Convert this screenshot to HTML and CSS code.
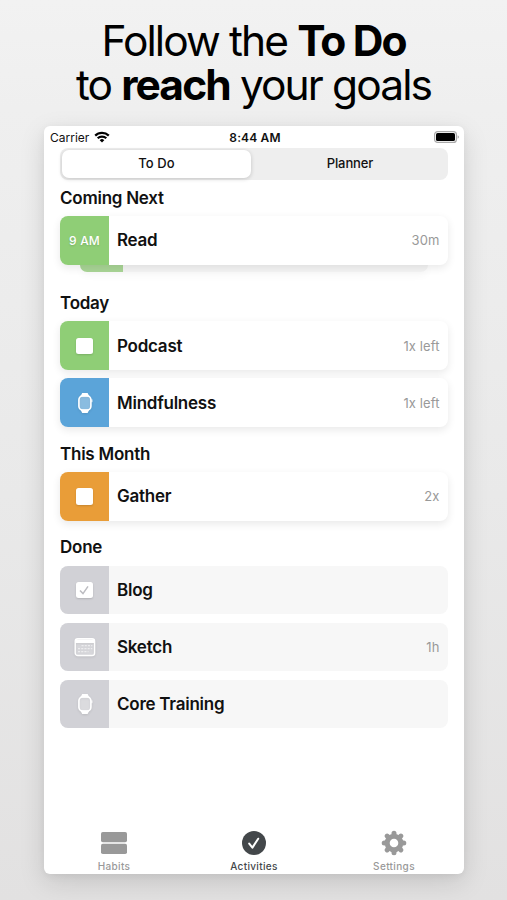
FILE: index.html
```html
<!DOCTYPE html>
<html lang="en">
<head>
<meta charset="utf-8">
<title>To Do</title>
<link rel="stylesheet" href="styles.css">
</head>
<body>
<svg class="defs" width="0" height="0" aria-hidden="true">
  <symbol id="watch" viewBox="0 0 16 22">
    <path d="M3.4 4.6 5.2 1h5.4l1.8 3.6ZM3.4 17.4 5.2 21h5.4l1.8-3.6Z" fill="#fff"/>
    <rect x="1.9" y="3.9" width="12" height="14.2" rx="3.8" fill="#fff" fill-opacity=".3" stroke="#fff" stroke-width="1.6"/>
    <path d="M14.9 7.4v2.8" stroke="#fff" stroke-width="1"/>
  </symbol>
</svg>
<h1 class="title"><span class="line line-one">Follow the <b>To Do</b></span><span class="line line-two">to <b>reach</b> your goals</span></h1>
<main class="phone">
  <header class="status">
    <div class="carrier"><span>Carrier</span>
      <svg width="16" height="12" viewBox="0 0 16 12" fill="none" stroke="#000" stroke-width="2.2"><path d="M1.2 4.6a9.7 9.7 0 0 1 13.6 0M3.7 7.3a6.1 6.1 0 0 1 8.6 0"/><path d="m8 11.6-2.3-2.4a3.3 3.3 0 0 1 4.6 0Z" fill="#000" stroke="none"/></svg>
    </div>
    <time class="clock">8:44 AM</time>
    <svg class="battery" width="26" height="12" viewBox="0 0 26 12"><rect x=".6" y=".6" width="21.8" height="10.8" rx="3" fill="#fff" stroke="#aaa" stroke-width="1.2"/><rect x="2" y="2" width="19" height="8" rx="1.6"/><path d="M23.6 4.2c1.8.7 1.8 2.9 0 3.6Z" fill="#aaa"/></svg>
  </header>
  <nav class="segments"><span class="segment selected">To Do</span><span class="segment planner">Planner</span></nav>

  <section class="group next">
    <h2>Coming Next</h2>
    <div class="stack">
      <div class="card"><div class="tile green"><span class="hour">9 AM</span></div><span class="name">Read</span><span class="amount">30m</span></div>
      <div class="peek"></div>
    </div>
  </section>

  <section class="group">
    <h2>Today</h2>
    <div class="card"><div class="tile green"><i class="box"></i></div><span class="name">Podcast</span><span class="amount">1x left</span></div>
    <div class="card"><div class="tile blue"><svg class="icon" width="16" height="22"><use href="#watch"/></svg></div><span class="name">Mindfulness</span><span class="amount">1x left</span></div>
  </section>

  <section class="group">
    <h2>This Month</h2>
    <div class="card"><div class="tile orange"><i class="box"></i></div><span class="name">Gather</span><span class="amount">2x</span></div>
  </section>

  <section class="group done">
    <h2>Done</h2>
    <div class="card"><div class="tile gray"><i class="box"><svg width="16" height="16" viewBox="0 0 16 16" fill="none" stroke="#bcbcc1" stroke-width="1.5"><path d="m4 8.4 3 3.2L12 4.4"/></svg></i></div><span class="name">Blog</span></div>
    <div class="card"><div class="tile gray"><svg class="icon" width="22" height="20" viewBox="0 0 22 20" fill="none" stroke="#fff"><rect x="1.2" y="1.7" width="19.4" height="16.8" rx="2.6" fill="#fff" fill-opacity=".2" stroke-width="1.4"/><path d="M1.5 4.2h18.8" stroke-width="3.6"/><path d="M7.5 8.7h10.8M4 11.7h14.3M4 14.7h10.5" stroke-width="1.3" stroke-dasharray="2.1 1.1" stroke-opacity=".55"/></svg></div><span class="name">Sketch</span><span class="amount">1h</span></div>
    <div class="card"><div class="tile gray"><svg class="icon" width="16" height="22"><use href="#watch"/></svg></div><span class="name">Core Training</span></div>
  </section>

  <footer class="tabs">
    <div class="tab"><svg width="26" height="26" viewBox="0 0 26 26" fill="#999"><rect y="2" width="26" height="10.3" rx="1.8"/><rect y="13.8" width="26" height="10.3" rx="1.8"/></svg><span>Habits</span></div>
    <div class="tab active"><svg width="26" height="26" viewBox="0 0 26 26"><circle cx="13" cy="13" r="12" fill="#43474a"/><path d="m8.2 13.6 3.2 4L17.2 8.7" fill="none" stroke="#fff" stroke-width="2" stroke-linecap="round" stroke-linejoin="round"/></svg><span>Activities</span></div>
    <div class="tab"><svg width="26" height="26" viewBox="0 0 26 26" stroke="#999"><circle cx="13" cy="13" r="6.8" fill="none" stroke-width="5"/><path d="M13 3.2v2.3M13 20.5v2.3M3.2 13h2.3M20.5 13h2.3M6.1 6.1l1.6 1.6M18.3 18.3l1.6 1.6M6.1 19.9l1.6-1.6M18.3 7.7l1.6-1.6" stroke-width="5" stroke-linecap="round"/></svg><span>Settings</span></div>
  </footer>
</main>
</body>
</html>
```
FILE: styles.css
```css
* { box-sizing: border-box; }
body {
  margin: 0;
  height: 900px;
  overflow: hidden;
  display: flex;
  flex-direction: column;
  align-items: center;
  font-family: Inter, "Liberation Sans", sans-serif;
  color: #111;
  background: linear-gradient(#f2f2f2, #efefef 12%, #e9e9e9 55%, #e2e1e1);
}
.defs { position: absolute; }
.title {
  margin: 0;
  height: 126px;
  padding-top: 19px;
  font-size: 42.5px;
  line-height: 44px;
  font-weight: 370;
  color: #000;
  text-align: center;
  white-space: nowrap;
}
.title b { font-weight: 700; }
.line { display: block; }
.line-one { letter-spacing: -1.9px; }
.line-two { letter-spacing: -1.9px; }
.phone {
  width: 420px;
  height: 748px;
  margin-left: 1px;
  padding: 0 16px;
  display: flex;
  flex-direction: column;
  background: #fff;
  border-radius: 6px;
  box-shadow: 0 8px 26px rgba(0, 0, 0, .13), 0 2px 8px rgba(0, 0, 0, .05);
}
.status {
  height: 22px;
  margin: 0 -12px 0 -10px;
  display: grid;
  grid-template-columns: 1fr auto 1fr;
  align-items: center;
  font-size: 12px;
}
.carrier { display: flex; align-items: center; gap: 5px; }
.clock { font-weight: 600; letter-spacing: .15px; }
.battery { justify-self: end; margin-right: 0; }
.segments {
  height: 31.5px;
  padding: 2px;
  display: flex;
  background: #eee;
  border-radius: 8px;
}
.segment {
  flex: 1;
  display: flex;
  align-items: center;
  justify-content: center;
  padding-bottom: 1px;
  font-size: 13px;
  font-weight: 500;
}
.planner { letter-spacing: -.1px; padding-left: 3px; }
.selected {
  flex: none;
  width: 189px;
  font-weight: 500;
  letter-spacing: .1px;
  background: #fff;
  border-radius: 7px;
  box-shadow: 0 1px 4px rgba(0, 0, 0, .18);
}
.group { margin-bottom: 8.5px; display: flex; flex-direction: column; }
.next { margin-bottom: 12.5px; }
.done { margin-bottom: 0; }
h2 {
  margin: 0;
  height: 36.3px;
  line-height: 36px;
  font-size: 17px;
  font-weight: 600;
  letter-spacing: -.25px;
}
.card {
  height: 48.8px;
  padding-right: 8.5px;
  display: flex;
  align-items: center;
  background: #fff;
  border-radius: 8px;
  box-shadow: 0 3px 9px rgba(0, 0, 0, .09);
}
.card + .card { margin-top: 8.2px; }
.done .card { background: #f7f7f7; box-shadow: none; }
.stack .card { position: relative; }
.peek {
  height: 7px;
  margin: 0 20px 1px;
  border-radius: 0 0 8px 8px;
  background: linear-gradient(90deg, #a9d596 43px, #f4f4f4 43px);
  box-shadow: 0 3px 8px rgba(0, 0, 0, .04);
}
.tile {
  width: 49px;
  height: 100%;
  display: flex;
  align-items: center;
  justify-content: center;
  border-radius: 8px 0 0 8px;
}
.green { background: #8fce76; }
.blue { background: #5ba4d9; }
.orange { background: #e99d38; }
.gray { background: #d1d1d6; }
.hour { color: #fff; font-size: 12px; font-weight: 500; letter-spacing: .2px; text-shadow: 0 1px 2px rgba(0, 0, 0, .15); }
.box { width: 16.5px; height: 16.5px; background: #fff; border-radius: 2.5px; box-shadow: 0 1px 2px rgba(0, 0, 0, .15); }
.box svg { display: block; }
.icon { filter: drop-shadow(0 1px 1px rgba(0, 0, 0, .1)); }
.name { flex: 1; margin-left: 8px; font-size: 17px; font-weight: 600; letter-spacing: -.25px; }
.amount { color: #999; font-size: 13px; letter-spacing: .1px; }
.tabs {
  margin: auto -16px 0;
  height: 46px;
  display: flex;
}
.tab {
  flex: 1;
  display: flex;
  flex-direction: column;
  align-items: center;
  gap: 4px;
  padding-top: 2px;
  color: #999;
  font-size: 10px;
  font-weight: 500;
  line-height: 13px;
  letter-spacing: .35px;
}
.active { color: #43474a; }
```
